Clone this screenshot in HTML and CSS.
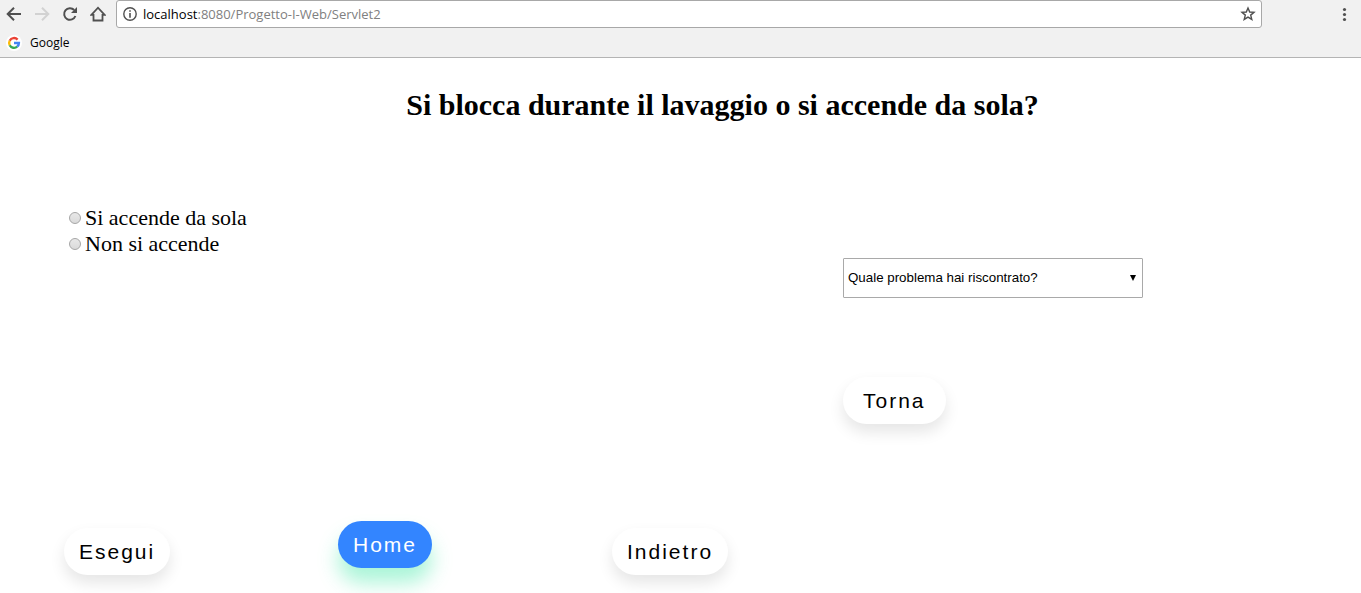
FILE: index.html
```
<!DOCTYPE html>
<html lang="it">
<head>
<meta charset="utf-8">
<meta name="viewport" content="width=device-width, initial-scale=1">
<title>Diagnosi lavatrice</title>
<link rel="stylesheet" href="styles.css">
</head>
<body>
<header class="browser">
  <div class="toolbar">
    <nav class="nav" aria-label="Navigazione">
      <button class="icon-button" type="button" aria-label="Pagina precedente">
        <svg width="16" height="16" viewBox="0 0 16 16"><path d="M15 8H2M8 1.700L1.700 8L8 14.300" fill="none" stroke="#505050" stroke-width="2"/></svg>
      </button>
      <button class="icon-button" type="button" aria-label="Pagina successiva" disabled>
        <svg width="16" height="16" viewBox="0 0 16 16"><path d="M1 8H14M8 1.700L14.300 8L8 14.300" fill="none" stroke="#d2d2d2" stroke-width="2"/></svg>
      </button>
      <button class="icon-button" type="button" aria-label="Ricarica">
        <svg width="16" height="16" viewBox="0 0 16 16"><path d="M13.400 10A5.800 5.800 0 1 1 12.200 4" fill="none" stroke="#505050" stroke-width="2"/><path d="M15 1V7H9Z" fill="#505050"/></svg>
      </button>
      <button class="icon-button" type="button" aria-label="Pagina iniziale">
        <svg width="16" height="16" viewBox="0 0 16 16"><path d="M1.400 8.800L8 1.700L14.600 8.800H12.500V14.500H3.500V8.800Z" fill="none" stroke="#505050" stroke-width="1.800"/></svg>
      </button>
    </nav>
    <div class="address">
      <svg class="info" width="14" height="14" viewBox="0 0 14 14" aria-hidden="true"><circle cx="7" cy="7" r="6.200" fill="none" stroke="#505050" stroke-width="1.400"/><path d="M7 3.200V4.800M7 6V10.800" stroke="#505050" stroke-width="1.600"/></svg>
      <label class="host" for="url">localhost</label>
      <input class="path" id="url" type="text" value=":8080/Progetto-I-Web/Servlet2">
      <button class="icon-button" type="button" aria-label="Aggiungi ai preferiti">
        <svg width="16" height="16" viewBox="0 0 16 16"><path d="M8 2L9.700 6L14 6.300L10.700 9.100L11.800 13.400L8 11.100L4.200 13.400L5.300 9.100L2 6.300L6.300 6Z" fill="none" stroke="#505050" stroke-width="1.400"/></svg>
      </button>
    </div>
    <button class="icon-button" type="button" aria-label="Menu">
      <svg width="16" height="16" viewBox="0 0 16 16"><g fill="#505050"><circle cx="7.500" cy="3.500" r="1.600"/><circle cx="7.500" cy="8.500" r="1.600"/><circle cx="7.500" cy="13.500" r="1.600"/></g></svg>
    </button>
  </div>
  <div class="bookmarks">
    <a class="bookmark" href="#">
      <svg width="16" height="16" viewBox="0 0 16 16" aria-hidden="true"><circle cx="8" cy="8" r="8" fill="#fff"/><g fill="none" stroke-width="2.400"><path d="M11.600 4.600A4.900 4.900 0 0 0 3.700 5.700" stroke="#ea4335"/><path d="M3.700 5.700A4.900 4.900 0 0 0 3.700 10.300" stroke="#fbbc05"/><path d="M3.700 10.300A4.900 4.900 0 0 0 11.200 11.700" stroke="#34a853"/><path d="M8 8H12.900A4.900 4.900 0 0 1 11.200 11.700" stroke="#4285f4"/></g></svg>
      Google
    </a>
  </div>
</header>
<main>
  <form class="page">
    <h1 class="title">Si blocca durante il lavaggio o si accende da sola?</h1>
    <div class="content">
      <fieldset class="choices">
        <label class="choice"><input class="radio" type="radio" name="stato" value="acceso">Si accende da sola</label>
        <label class="choice"><input class="radio" type="radio" name="stato" value="spento">Non si accende</label>
      </fieldset>
      <div class="side">
        <div class="picker">
          <select class="problem" aria-label="Problema riscontrato"><option>Quale problema hai riscontrato?</option></select>
          <svg class="arrow" width="6" height="6" viewBox="0 0 6 6" aria-hidden="true"><path d="M0 0H6L3 6Z"/></svg>
        </div>
        <button class="pill wide" type="button">Torna</button>
      </div>
    </div>
    <div class="actions">
      <div><button class="pill" type="button">Esegui</button></div>
      <div><button class="pill raised" type="button">Home</button></div>
      <div><button class="pill" type="button">Indietro</button></div>
    </div>
  </form>
</main>
</body>
</html>
```
FILE: styles.css
```
* {
  box-sizing: border-box;
}

body {
  margin: 0;
  background: #fff;
  color: #000;
  font-family: "Liberation Serif", serif;
}

.browser {
  background: #f1f1f1;
  border-bottom: 1px solid #b4b4b4;
  font-family: "Open Sans", "Noto Sans", sans-serif;
}

.toolbar {
  display: flex;
  align-items: center;
  justify-content: space-between;
  height: 28px;
  padding: 0 8px 0 6px;
}

.nav {
  display: flex;
  gap: 12px;
  margin-right: 10px;
}

.icon-button {
  display: flex;
  padding: 0;
  border: 0;
  background: none;
}

.address {
  display: flex;
  flex: 1;
  align-items: center;
  height: 28px;
  margin-right: 75px;
  padding: 0 5px 0 6px;
  border: 1px solid #a8a8a8;
  border-radius: 3px;
  background: #fff;
  font-size: 13px;
}

.info {
  margin-right: 6px;
}

.path {
  flex: 1;
  min-width: 0;
  padding: 0;
  border: 0;
  outline: 0;
  background: none;
  color: #808080;
  font: inherit;
}

.bookmarks {
  display: flex;
  align-items: center;
  height: 29px;
  padding: 0 6px;
}

.bookmark {
  display: flex;
  align-items: center;
  gap: 8px;
  color: #000;
  font-size: 12px;
  text-decoration: none;
}

.page {
  padding: 30px 0 18px 64px;
}

.title {
  margin: 0 0 83px;
  padding-left: 20px;
  font-size: 30px;
  line-height: 34px;
  text-align: center;
}

.content {
  display: grid;
  grid-template-columns: 3fr 2fr;
  column-gap: 2px;
}

.choices {
  margin: 0;
  padding: 0 0 0 5px;
  border: 0;
}

.choice {
  display: flex;
  align-items: center;
  gap: 4px;
  font-size: 22px;
  line-height: 26px;
}

.radio {
  appearance: none;
  width: 12px;
  height: 12px;
  margin: 0;
  border: 1px solid #a6a6a6;
  border-radius: 50%;
  background: linear-gradient(#e8e8e8, #dadada);
}

.radio:checked {
  background: radial-gradient(#444 3px, #e0e0e0 4px);
}

.side {
  display: flex;
  flex-direction: column;
  align-items: flex-start;
  gap: 79px;
  padding-top: 53px;
}

.picker {
  position: relative;
  width: 300px;
}

.problem {
  appearance: none;
  display: block;
  width: 100%;
  height: 40px;
  padding: 0 20px 2px 4px;
  border: 1px solid #a9a9a9;
  border-radius: 1px;
  background: #fff;
  color: #000;
  font-family: "Liberation Sans", sans-serif;
}

.arrow {
  position: absolute;
  top: 17px;
  right: 7px;
  pointer-events: none;
}

.actions {
  display: grid;
  grid-template-columns: 15fr 15fr 41fr;
  margin-top: 104px;
}

.pill {
  height: 47px;
  padding: 0 15px;
  border: 0;
  border-radius: 45px;
  background: #fff;
  box-shadow: 0 8px 15px rgba(0, 0, 0, 0.1);
  color: #000;
  font: 21px "Liberation Sans", sans-serif;
  letter-spacing: 2px;
}

.wide {
  padding: 0 20px;
}

.raised {
  background: #3385ff;
  box-shadow: 0 15px 20px rgba(46, 229, 157, 0.4);
  color: #fff;
  transform: translateY(-7px);
}
```
